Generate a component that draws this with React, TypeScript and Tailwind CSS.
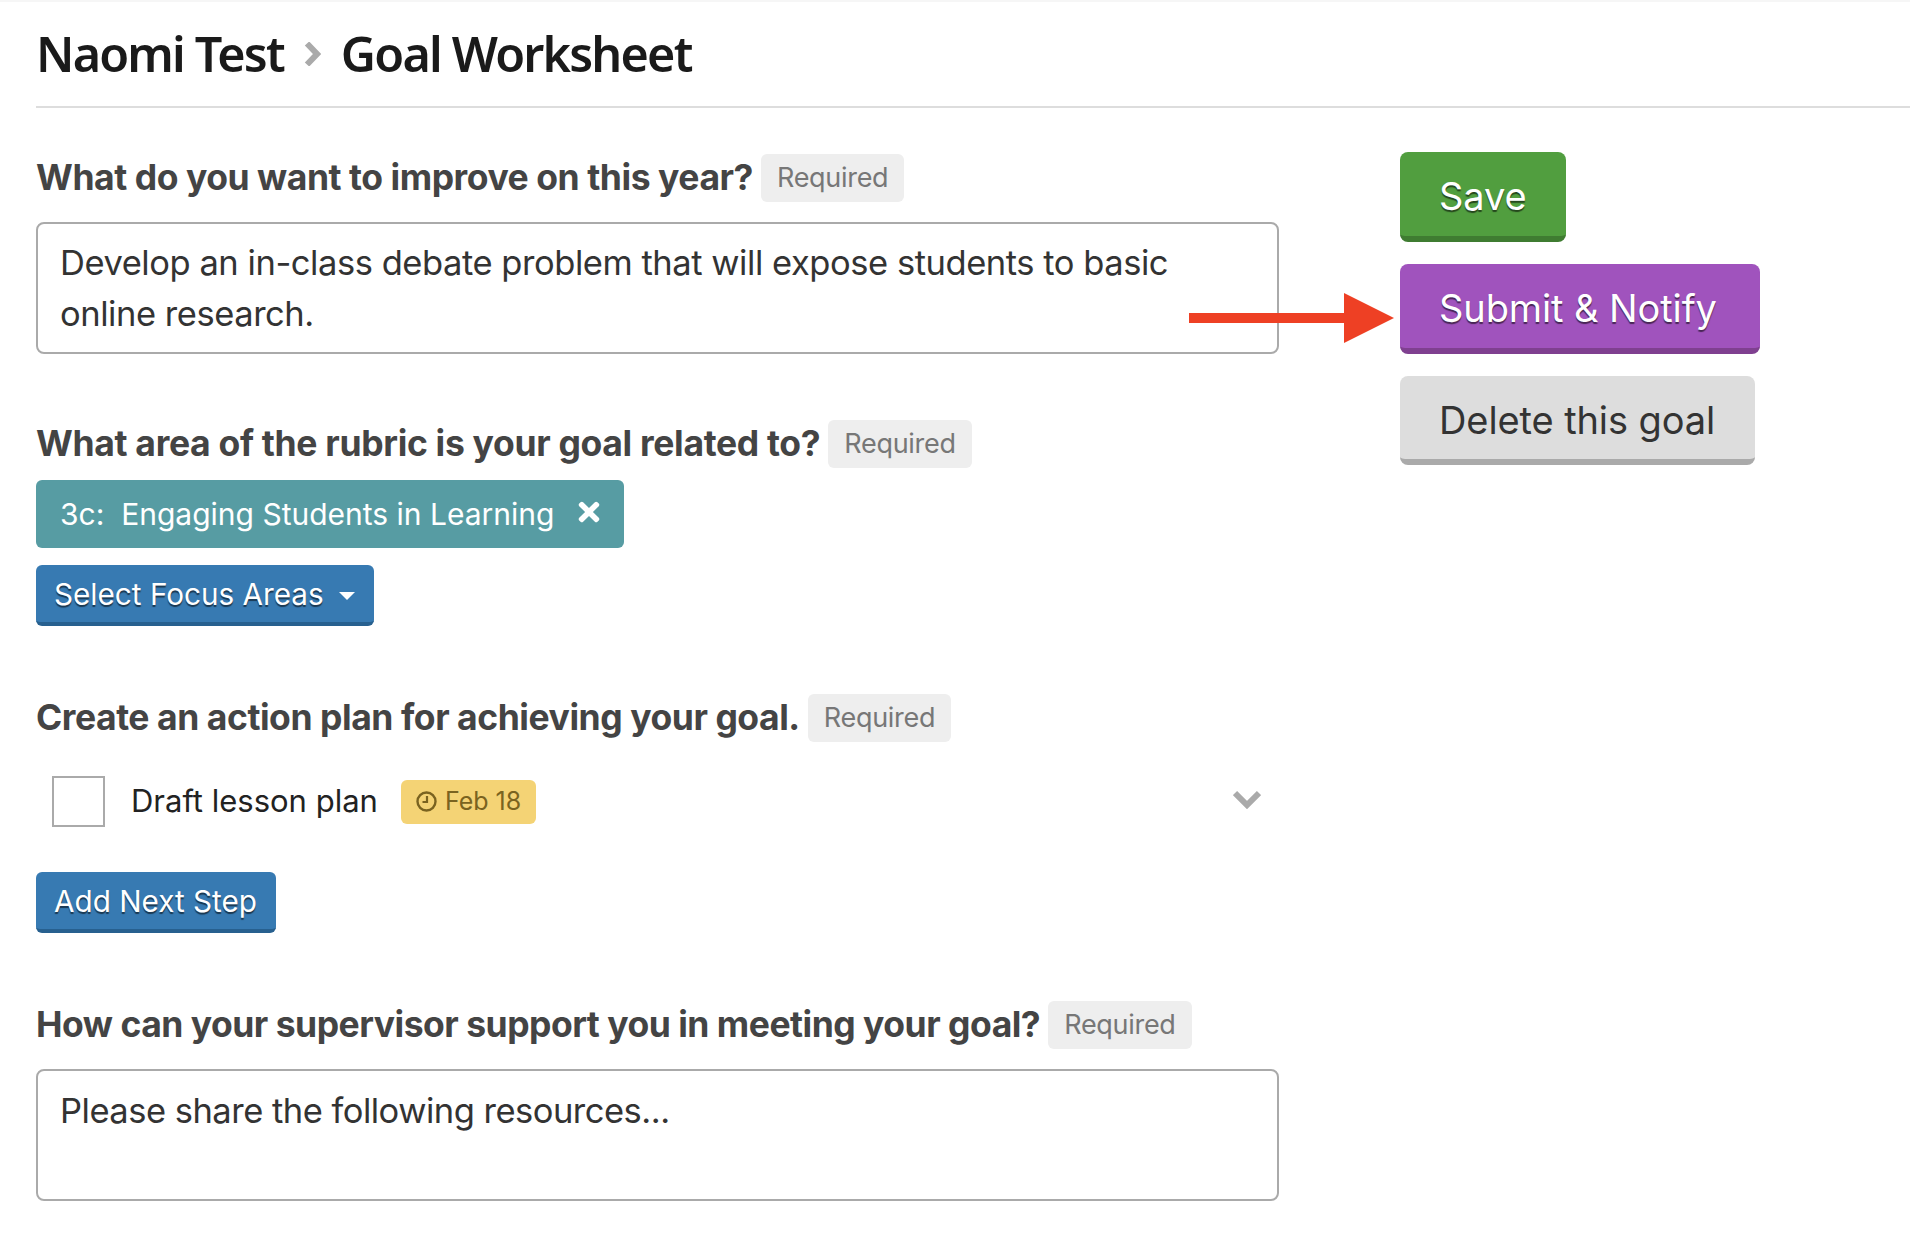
import { FaTimes } from "react-icons/fa";

const inter = "font-['Inter','Liberation_Sans',sans-serif]";

function FieldLabel({ text, tracking = "tracking-[-0.45px]" }: { text: string; tracking?: string }) {
  return (
    <div className="flex h-12 items-center gap-2">
      <span className={`text-[35.5px] font-bold text-[#444] ${tracking}`}>{text}</span>
      <span className="flex h-12 items-center rounded-md bg-[#eee] px-4 text-[27px] tracking-[-0.3px] text-[#777]">Required</span>
    </div>
  );
}

function BlueButton({ children }: { children: React.ReactNode }) {
  return (
    <button
      type="button"
      className="flex h-[61px] items-center gap-[15px] rounded-md border-b-[4px] border-[#27608f] bg-[#377ab2] pl-[18px] pr-[19px] pt-px text-[29.7px] text-white [text-shadow:0_2px_1px_rgba(0,0,0,0.55)]"
    >
      {children}
    </button>
  );
}

function ClockIcon() {
  return (
    <svg viewBox="0 0 21 21" className="h-[21px] w-[21px]" fill="none" stroke="#7a6320" strokeWidth="2.4">
      <circle cx="10.5" cy="10.5" r="9" />
      <path d="M11 5v6H6.5" strokeWidth="2.2" />
    </svg>
  );
}

export default function App() {
  return (
    <div className={`min-h-[1234px] w-[1910px] overflow-hidden bg-white ${inter}`}>
      <div className="h-[2px] bg-[#f6f6f6]" />
      <div className="ml-9 flex h-[106px] items-center gap-5 border-b-2 border-[#ddd] pb-px font-['Noto_Sans',sans-serif] text-[48.5px] font-semibold tracking-[-1.8px] text-[#1a1a1a]">
        <span>Naomi Test</span>
        <svg viewBox="0 0 17 24" className="h-6 w-[17px]" fill="none" stroke="#aaa" strokeWidth="6">
          <path d="M3 1.5l10 10.5-10 10.5" />
        </svg>
        <span>Goal Worksheet</span>
      </div>

      <div className="ml-9 mt-[46px] flex gap-[121px]">
        <div className="w-[1243px] shrink-0">
          <FieldLabel text="What do you want to improve on this year?" />
          <div className="mt-5 h-[132px] rounded-lg border-2 border-[#aaa] px-[22px] pt-[13px] text-[34.5px] leading-[51px] tracking-[-0.45px] text-[#333]">
            Develop an in-class debate problem that will expose students to basic online research.
          </div>

          <div className="mt-[66px]">
            <FieldLabel text="What area of the rubric is your goal related to?" tracking="tracking-[-0.32px]" />
          </div>
          <div className="mt-3 flex h-[68px] w-[588px] items-center gap-[22px] rounded-md bg-[#579ca3] pl-6 text-[30px] whitespace-pre text-white">
            <span>3c:  Engaging Students in Learning</span>
            <FaTimes className="-mt-1 h-[30px] w-[24px]" />
          </div>
          <div className="mt-[17px] flex">
            <BlueButton>
              Select Focus Areas
              <span className="mt-1 h-0 w-0 border-x-[8px] border-t-[8px] border-x-transparent border-t-white" />
            </BlueButton>
          </div>

          <div className="mt-[68px]">
            <FieldLabel text="Create an action plan for achieving your goal." />
          </div>
          <div className="mt-[34px] flex h-[51px] items-center pl-4 pr-[18px]">
            <div className="h-[51px] w-[53px] border-2 border-[#aaa]" />
            <span className="ml-[26px] text-[31px] text-[#222]">Draft lesson plan</span>
            <span className="ml-[23px] flex h-11 items-center gap-2 rounded-md bg-[#f4d375] px-[15px] text-[25px] text-[#7a6320]">
              <ClockIcon />
              Feb 18
            </span>
            <svg viewBox="0 0 28 19" className="ml-auto -mt-[5px] h-[19px] w-7" fill="none" stroke="#aaa" strokeWidth="6">
              <path d="M2 3l12 12L26 3" />
            </svg>
          </div>
          <div className="mt-[45px] flex">
            <BlueButton>Add Next Step</BlueButton>
          </div>

          <div className="mt-[68px]">
            <FieldLabel text="How can your supervisor support you in meeting your goal?" tracking="tracking-[-0.5px]" />
          </div>
          <div className="mt-5 h-[132px] rounded-lg border-2 border-[#aaa] px-[22px] pt-[14px] text-[34.5px] leading-[51px] tracking-[-0.5px] text-[#333]">
            Please share the following resources...
          </div>
        </div>

        <div className="relative -mt-[2px] flex flex-col items-start gap-[22px]">
          <button
            type="button"
            className="flex h-[90px] w-[166px] items-center rounded-lg border-b-[6px] border-[#3f7c31] bg-[#519e3f] pl-[39px] pt-[5px] text-[38px] tracking-[-0.1px] whitespace-nowrap text-white [text-shadow:0_2px_1px_rgba(0,0,0,0.55)]"
          >
            Save
          </button>
          <button
            type="button"
            className="flex h-[90px] w-[360px] items-center rounded-lg border-b-[6px] border-[#7f4090] bg-[#a053bd] pl-[39px] pt-[5px] text-[38px] tracking-[-0.1px] whitespace-nowrap text-white [text-shadow:0_2px_1px_rgba(0,0,0,0.55)]"
          >
            Submit &amp; Notify
          </button>
          <button
            type="button"
            className="flex h-[89px] w-[355px] items-center rounded-lg border-b-[6px] border-[#aaa] bg-[#ddd] pl-[39px] pt-[5px] text-[38px] tracking-[-0.1px] whitespace-nowrap text-[#333]"
          >
            Delete this goal
          </button>
          {/* annotation arrow sits over the textarea edge */}
          <svg viewBox="0 0 205 50" className="absolute left-[-211px] top-[141px] h-[50px] w-[205px]">
            <rect x="0" y="20" width="156" height="10" fill="#ee4024" />
            <polygon points="155,0 205,25 155,50" fill="#ee4024" />
          </svg>
        </div>
      </div>
    </div>
  );
}
